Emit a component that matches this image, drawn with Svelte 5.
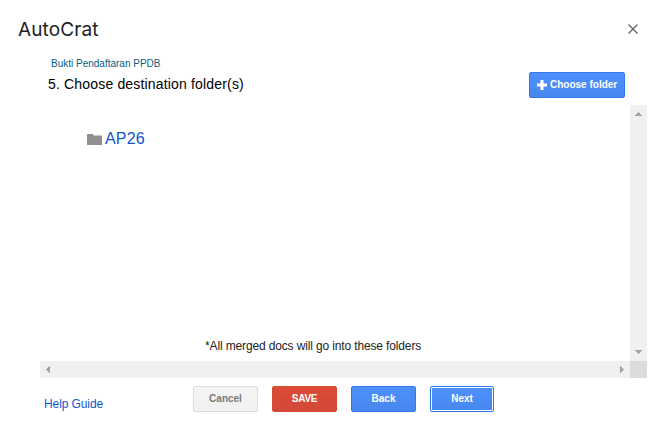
<script lang="ts">
	const project = 'Bukti Pendaftaran PPDB';
	const folders = ['AP26'];

	const actions = [
		{ label: 'Cancel', kind: 'plain' },
		{ label: 'SAVE', kind: 'create' },
		{ label: 'Back', kind: 'action' },
		{ label: 'Next', kind: 'action focused' }
	];
</script>

<div class="dialog">
	<header>
		<h1>AutoCrat</h1>
		<button class="close" aria-label="Close">
			<svg width="10" height="10" viewBox="0 0 10 10">
				<path d="M.5.5l9 9M9.5.5l-9 9" fill="none" stroke="#666" stroke-width="1.4" />
			</svg>
		</button>
	</header>

	<div class="intro">
		<div>
			<p class="project">{project}</p>
			<h2>5. Choose destination folder(s)</h2>
		</div>
		<button class="btn action choose">
			<svg width="10" height="10" viewBox="0 0 10 10">
				<path d="M3.5 0h3v3.5H10v3H6.5V10h-3V6.5H0v-3h3.5z" fill="#fff" />
			</svg>
			<span>Choose folder</span>
		</button>
	</div>

	<div class="pane">
		<div class="content">
			{#each folders as folder}
				<a class="folder" href="#folder">
					<svg width="15" height="11" viewBox="0 0 15 11">
						<path d="M0 .5Q0 0 .5 0H5.5L7 1.5h7.5q.5 0 .5.5v8.5q0 .5-.5.5H.5q-.5 0-.5-.5z" fill="#8f8f8f" />
					</svg>
					<span>{folder}</span>
				</a>
			{/each}
			<p class="note">*All merged docs will go into these folders</p>
		</div>
		<div class="bar vertical">
			<svg width="7" height="4" viewBox="0 0 7 4"><path d="M3 0h1v1h1v1h1v1h1v1H0V3h1V2h1V1h1z" /></svg>
			<svg width="7" height="4" viewBox="0 0 7 4"><path d="M0 0h7v1H6v1H5v1H4v1H3V3H2V2H1V1H0z" /></svg>
		</div>
		<div class="bar">
			<svg width="4" height="7" viewBox="0 0 4 7"><path d="M4 0v7H3V6H2V5H1V4H0V3h1V2h1V1h1V0z" /></svg>
			<svg width="4" height="7" viewBox="0 0 4 7"><path d="M0 0h1v1h1v1h1v1h1v1H3v1H2v1H1v1H0z" /></svg>
		</div>
		<div class="corner"></div>
	</div>

	<footer>
		<a class="help" href="#help">Help Guide</a>
		{#each actions as action}
			<button class="btn {action.kind}">{action.label}</button>
		{/each}
	</footer>
</div>

<style>
	:global(body) {
		margin: 0;
		background: #fff;
	}

	.dialog {
		box-sizing: border-box;
		width: 665px;
		height: 438px;
		overflow: hidden;
		font-family: 'Liberation Sans', Arial, sans-serif;
		color: #000;
	}

	h1,
	h2,
	p {
		margin: 0;
		font-weight: normal;
	}

	svg {
		display: block;
		flex: none;
	}

	a {
		color: #15c;
		text-decoration: none;
	}

	header {
		display: flex;
		justify-content: space-between;
		align-items: center;
		height: 57px;
		padding: 0 27px 0 18px;
	}

	h1 {
		padding-top: 2px;
		font-family: Inter, sans-serif;
		font-size: 19px;
		line-height: 24px;
		letter-spacing: 0.1px;
		color: #202124;
	}

	.close {
		padding: 0;
		border: 0;
		background: none;
	}

	.intro {
		display: flex;
		justify-content: space-between;
		align-items: flex-start;
		height: 48px;
		padding: 0 40px 0 48px;
	}

	.project {
		padding-left: 3px;
		font-size: 10px;
		line-height: 14px;
		color: #0b5b7f;
	}

	h2 {
		padding-top: 4px;
		font-size: 14px;
		line-height: 18px;
		letter-spacing: 0.17px;
	}

	.btn {
		box-sizing: border-box;
		width: 65px;
		height: 26px;
		margin: 0 14px 0 0;
		padding: 0;
		border: 1px solid transparent;
		border-radius: 2px;
		font: bold 10px/24px 'Liberation Sans', Arial, sans-serif;
		text-align: center;
	}

	.plain {
		color: #777;
		border-color: #dcdcdc;
		background: linear-gradient(#f5f5f5, #f1f1f1);
	}

	.create {
		color: #fff;
		border-color: #d84937;
		background: linear-gradient(#dd4b39, #d14836);
		letter-spacing: -0.3px;
	}

	.action {
		color: #fff;
		border-color: #3079ed;
		background: linear-gradient(#4d90fe, #4787ed);
	}

	.focused {
		width: 64px;
		box-shadow: inset 0 0 0 1px #fff;
	}

	.choose {
		display: flex;
		align-items: center;
		gap: 3px;
		width: 96px;
		margin: 15px 0 0;
		padding-left: 7px;
		white-space: nowrap;
	}

	.pane {
		display: grid;
		grid-template: 256px 17px / 590px 17px;
		margin-left: 40px;
		width: 607px;
	}

	.content {
		display: flex;
		flex-direction: column;
		justify-content: space-between;
		padding: 24px 0 7px 47px;
	}

	.folder {
		display: flex;
		align-items: center;
		gap: 3px;
		font-size: 16px;
		line-height: 20px;
		letter-spacing: 0.2px;
	}

	.folder svg {
		margin-top: 1px;
	}

	.note {
		padding-left: 118px;
		font-size: 12px;
		line-height: 16px;
		letter-spacing: -0.14px;
		color: #222;
	}

	.bar {
		display: flex;
		justify-content: space-between;
		align-items: center;
		padding: 0 6px;
		background: #f0f0f0;
		fill: #a3a3a3;
	}

	.vertical {
		flex-direction: column;
		padding: 7px 0;
	}

	.corner {
		background: #dcdcdc;
	}

	footer {
		display: flex;
		align-items: flex-start;
		padding: 8px 0 0 44px;
	}

	.help {
		width: 149px;
		padding-top: 10px;
		font-size: 12px;
		line-height: 16px;
		letter-spacing: -0.1px;
	}
</style>
